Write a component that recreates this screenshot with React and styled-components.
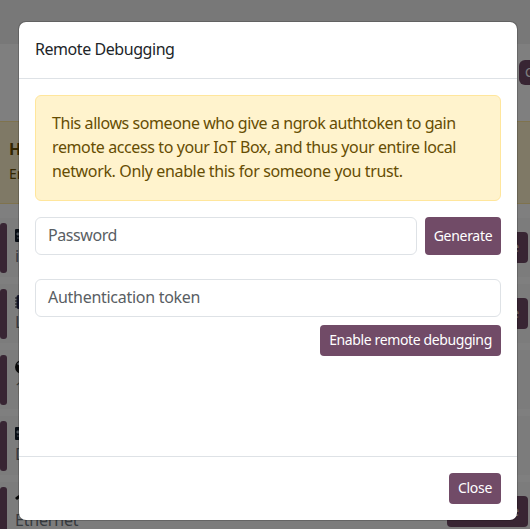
import React from "react";
import styled, { createGlobalStyle } from "styled-components";

const Global = createGlobalStyle`
  *{box-sizing:border-box}
  body{margin:0;overflow:hidden;font-family:"Noto Sans",sans-serif;font-size:16px;line-height:24px;color:#212529}
`;
const Screen = styled.div`position:relative;height:529px;overflow:hidden;background:#fff;`;
const TopBar = styled.header`height:44px;background:#f0f0f0;`;
const Toolbar = styled.div`height:77px;display:flex;align-items:flex-start;padding:16px 0 0 519px;`;
const ToolButton = styled.span`
  flex:none;width:80px;height:25px;border-radius:6px;background:#714b67;color:#fff;
  font-size:13px;line-height:25px;padding-left:6px;
`;
const PageNotice = styled.section`
  height:83px;background:#fff3cd;border:solid #ffe69c;border-width:1px 0;color:#664d03;
  padding:15px 9px;font-size:14px;line-height:26px;
`;
const NoticeTitle = styled.div`font-size:16px;font-weight:700;line-height:24px;`;
const Devices = styled.div`display:flex;flex-direction:column;gap:7px;padding-top:14px;`;
const Device = styled.div`
  height:59px;flex:none;display:flex;align-items:flex-start;padding:5px 2px 4px 0;background:#f8f8f8;
`;
const Accent = styled.div`width:7px;height:50px;background:#714b67;border-radius:3px;`;
const DeviceInfo = styled.div`flex:1;padding:5px 8px;color:#6c757d;line-height:24px;`;
const IconBox = styled.div`height:16px;svg{display:block}`;
const DeviceName = styled.div`letter-spacing:-0.2px;`;
const DeviceButton = styled.span`
  width:81px;height:31px;margin-top:9px;padding-right:9px;border-radius:4px;background:#714b67;color:#fff;
  font-size:14px;line-height:29px;text-align:right;
`;
const Backdrop = styled.div`position:absolute;inset:0;background:rgba(0,0,0,.5);`;
const Modal = styled.section`
  position:absolute;left:18px;top:21px;width:500px;height:500px;display:flex;flex-direction:column;
  border:1px solid rgba(0,0,0,.18);border-radius:8px;background:#fff;background-clip:padding-box;
`;
const ModalHeader = styled.header`
  height:57px;border-bottom:1px solid #dee2e6;padding:15px 16px;letter-spacing:-0.44px;
`;
const ModalBody = styled.main`flex:1;padding:16px;`;
const Warning = styled.div`
  height:106px;padding:15px 16px;border:1px solid #ffe69c;border-radius:6px;background:#fff3cd;
  color:#664d03;white-space:nowrap;
`;
const Line = styled.div`letter-spacing:${p => p.$spacing}px;`;
const FieldRow = styled.div`display:flex;gap:8px;margin:16px 0 24px;`;
const Field = styled.div`
  flex:1;height:38px;border:1px solid #dee2e6;border-radius:6px;padding:5px 12px;
  color:#595e63;letter-spacing:${p => p.$spacing}px;
`;
const Button = styled.button`
  width:${p => p.$width}px;height:${p => p.$height || 31}px;border:0;border-radius:4px;padding:0 0 2px;
  background:#714b67;color:#fff;font:14px "Noto Sans",sans-serif;letter-spacing:${p => p.$spacing}px;
  white-space:nowrap;
`;
const Actions = styled.div`display:flex;justify-content:flex-end;margin-top:8px;`;
const ModalFooter = styled.footer`
  height:64px;border-top:1px solid #dee2e6;padding:16px;display:flex;justify-content:flex-end;align-items:flex-start;
`;

const shapes = {
  printer: <><rect y="1" width="16" height="13" rx="1" fill="#111b28" /><path d="M2 5h2v2H2zM2 10h4" fill="#d7e0ea" stroke="#8d9bab" /></>,
  chip: <><rect x="1.5" y="1" width="13" height="14" rx="2" fill="#252855" /><path d="M0 4h3M0 7h3M0 10h3M0 13h3" stroke="#26272b" /></>,
  globe: <><circle cx="7" cy="7" r="7" fill="#111" /><path d="M2 4l2-2 3 1-2 3z" fill="#cbd9e4" /></>,
  wifi: <path d="M0 6Q8-2 16 6L14 8Q8 2 2 8zM4 10Q8 6 12 10L8 14z" fill="#111" />,
};
const devices = [
  { icon: "printer", name: "iot", action: "Configure" },
  { icon: "chip", name: "Local", action: "Configure" },
  { icon: "globe", name: "1.0" },
  { icon: "printer", name: "Display" },
  { icon: "wifi", name: "Ethernet", action: "Configure" },
];

export default function App() {
  return (
    <Screen>
      <Global />
      <TopBar />
      <Toolbar><ToolButton>Configure</ToolButton></Toolbar>
      <PageNotice><NoticeTitle>HTTPS</NoticeTitle>Enable</PageNotice>
      <Devices>
        {devices.map(d => (
          <Device key={d.name}>
            <Accent />
            <DeviceInfo>
              <IconBox><svg width="16" height="16">{shapes[d.icon]}</svg></IconBox>
              <DeviceName>{d.name}</DeviceName>
            </DeviceInfo>
            {d.action && <DeviceButton>{d.action}</DeviceButton>}
          </Device>
        ))}
      </Devices>
      <Backdrop />
      <Modal role="dialog" aria-label="Remote Debugging">
        <ModalHeader>Remote Debugging</ModalHeader>
        <ModalBody>
          <Warning>
            <Line $spacing={-0.43}>This allows someone who give a ngrok authtoken to gain</Line>
            <Line $spacing={-0.39}>remote access to your IoT Box, and thus your entire local</Line>
            <Line $spacing={-0.36}>network. Only enable this for someone you trust.</Line>
          </Warning>
          <FieldRow>
            <Field $spacing={-0.42}>Password</Field>
            <Button $width={76} $height={38} $spacing={-0.3}>Generate</Button>
          </FieldRow>
          <Field $spacing={-0.28}>Authentication token</Field>
          <Actions><Button $width={181} $spacing={-0.38}>Enable remote debugging</Button></Actions>
        </ModalBody>
        <ModalFooter><Button $width={52} $spacing={-0.3}>Close</Button></ModalFooter>
      </Modal>
    </Screen>
  );
}
